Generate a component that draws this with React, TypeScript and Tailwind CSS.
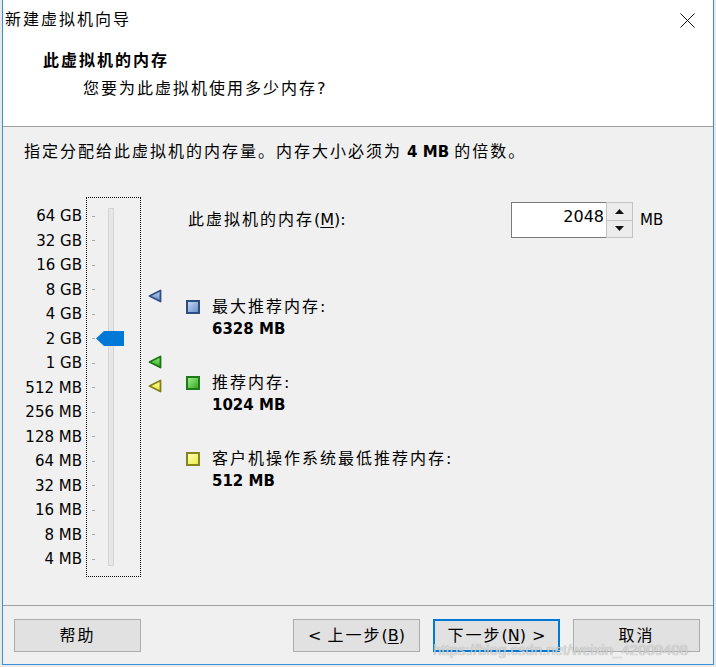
import React from "react";

const labels = ["64 GB","32 GB","16 GB","8 GB","4 GB","2 GB","1 GB","512 MB","256 MB","128 MB","64 MB","32 MB","16 MB","8 MB","4 MB"];

function C({ children, bold }: { children: React.ReactNode; bold?: boolean }) {
  return <span className={"tracking-[2px] " + (bold ? "font-bold" : "")}>{children}</span>;
}

function Tri({ fill1, fill2, stroke }: { fill1: string; fill2: string; stroke: string }) {
  const id = "g" + fill1.replace("#", "");
  return (
    <svg width="14" height="14" viewBox="0 0 14 14">
      <defs>
        <linearGradient id={id} x1="0" y1="0" x2="0" y2="1">
          <stop offset="0" stopColor={fill1} />
          <stop offset="1" stopColor={fill2} />
        </linearGradient>
      </defs>
      <polygon points="1.5,7 12.5,1.5 12.5,12.5" fill={`url(#${id})`} stroke={stroke} strokeWidth="1.8" strokeLinejoin="round" />
    </svg>
  );
}

function Sq({ fill1, fill2, stroke }: { fill1: string; fill2: string; stroke: string }) {
  const id = "s" + fill1.replace("#", "");
  return (
    <svg width="14" height="14" viewBox="0 0 14 14" className="shrink-0 mt-[4px]">
      <defs>
        <linearGradient id={id} x1="0" y1="0" x2="1" y2="1">
          <stop offset="0" stopColor={fill1} />
          <stop offset="1" stopColor={fill2} />
        </linearGradient>
      </defs>
      <rect x="0" y="0" width="14" height="14" fill={stroke} />
      <rect x="2" y="2" width="10" height="10" fill={`url(#${id})`} />
    </svg>
  );
}

export default function App() {
  return (
    <div className="relative w-[716px] h-[667px] bg-[#e9e9e9] pl-[2px] font-['DejaVu_Sans','Noto_Sans_CJK_SC',sans-serif] text-black">
      <div className="w-[712px] h-[665px] flex flex-col border-l border-r border-b border-[#3a8fd8] bg-[#f0f0f0]">
        {/* title bar */}
        <div className="h-[40px] bg-white flex items-center justify-between pl-[2px] pr-[18px]">
          <span className="text-[16px] leading-[22px]"><C>新建虚拟机向导</C></span>
          <svg width="15" height="15" viewBox="0 0 15 15">
            <path d="M0.5 0.5 L14.5 14.5 M14.5 0.5 L0.5 14.5" stroke="#111" strokeWidth="1" />
          </svg>
        </div>
        {/* header */}
        <div className="h-[86px] bg-white flex flex-col pt-[10px]">
          <div className="pl-[40px] text-[16px] leading-[22px] font-bold"><C bold>此虚拟机的内存</C></div>
          <div className="pl-[80px] mt-[6px] text-[16px] leading-[22px]"><C>您要为此虚拟机使用多少内存</C>?</div>
        </div>
        <div className="h-px bg-[#a0a0a0]" />
        {/* body */}
        <div className="h-[478px] flex flex-col pt-[14px]">
          <div className="pl-[21px] text-[16px] leading-[22px] whitespace-nowrap">
            <C>指定分配给此虚拟机的内存量。内存大小必须为</C> <span className="font-bold text-[15px]">4 MB</span> <C>的倍数。</C>
          </div>
          <div className="flex mt-[34px]">
            {/* labels */}
            <div className="w-[79px] pt-[7px] flex flex-col items-end">
              {labels.map((l) => (
                <div key={l} className="h-[24.5px] leading-[24.5px] text-[15px] whitespace-nowrap">{l}</div>
              ))}
            </div>
            {/* slider box */}
            <div className="relative ml-[4px] w-[55px] h-[380px] border border-dotted border-black flex">
              <div className="pl-[5px] pt-[6px] flex flex-col">
                {labels.map((l) => (
                  <div key={l} className="h-[24.5px] flex items-center">
                    <div className="w-[3px] h-px bg-[#a8a8a8]" />
                  </div>
                ))}
              </div>
              <div className="ml-[13px] mt-[10px] w-[6px] h-[358px] bg-[#e7e7e7] border border-[#d4d4d4]" />
              <svg className="absolute left-[9px] top-[133px]" width="28" height="15" viewBox="0 0 28 15">
                <polygon points="0,7.5 8,0 28,0 28,15 8,15" fill="#0078d7" />
              </svg>
            </div>
            {/* markers */}
            <div className="relative w-[45px] h-[380px]">
              <div className="absolute left-[7px] top-[92px]"><Tri fill1="#c4d6f2" fill2="#5a82c0" stroke="#2f4f86" /></div>
              <div className="absolute left-[7px] top-[158px]"><Tri fill1="#98ee80" fill2="#2ea820" stroke="#1a7414" /></div>
              <div className="absolute left-[7px] top-[182px]"><Tri fill1="#ffffa0" fill2="#e8e830" stroke="#807e1c" /></div>
            </div>
            {/* right side */}
            <div className="flex flex-col">
              <div className="mt-[5px] flex items-center">
                <div className="w-[325px] pl-[2px] text-[16px] leading-[22px] whitespace-nowrap">
                  <C>此虚拟机的内存</C>(<span className="underline underline-offset-2">M</span>):
                </div>
                <div className="w-[96px] h-[36px] bg-white border border-[#7a7a7a] flex items-start justify-end pt-[4px] pr-[2px] text-[16px] leading-[20px]">2048</div>
                <div className="w-[27px] h-[36px] flex flex-col border border-[#c2c2c2] bg-[#f0f0f0] -ml-[1px]">
                  <div className="flex-1 flex items-center justify-center border-b border-[#c2c2c2] bg-[#ececec]">
                    <svg width="9" height="5" viewBox="0 0 9 5"><polygon points="0,5 4.5,0 9,5" fill="#111" /></svg>
                  </div>
                  <div className="flex-1 flex items-center justify-center bg-[#ececec]">
                    <svg width="9" height="5" viewBox="0 0 9 5"><polygon points="0,0 9,0 4.5,5" fill="#111" /></svg>
                  </div>
                </div>
                <div className="ml-[7px] text-[15px]">MB</div>
              </div>
              <div className="mt-[58px] flex">
                <Sq fill1="#c4d6ef" fill2="#6c91c8" stroke="#2d4c80" />
                <div className="ml-[12px] flex flex-col">
                  <div className="text-[16px] leading-[22px]"><C>最大推荐内存</C>:</div>
                  <div className="text-[15px] leading-[22px] font-bold">6328 MB</div>
                </div>
              </div>
              <div className="mt-[32px] flex">
                <Sq fill1="#a2ec8a" fill2="#35a826" stroke="#1d7a16" />
                <div className="ml-[12px] flex flex-col">
                  <div className="text-[16px] leading-[22px]"><C>推荐内存</C>:</div>
                  <div className="text-[15px] leading-[22px] font-bold">1024 MB</div>
                </div>
              </div>
              <div className="mt-[32px] flex">
                <Sq fill1="#ffffb4" fill2="#ecec48" stroke="#858420" />
                <div className="ml-[12px] flex flex-col">
                  <div className="text-[16px] leading-[22px]"><C>客户机操作系统最低推荐内存</C>:</div>
                  <div className="text-[15px] leading-[22px] font-bold">512 MB</div>
                </div>
              </div>
            </div>
          </div>
        </div>
        <div className="h-px bg-[#a0a0a0]" />
        {/* footer */}
        <div className="h-[58px] flex items-start pt-[13px] pl-[11px] pr-[13px] text-[16px]">
          <button className="w-[127px] h-[33px] bg-[#e1e1e1] border border-[#adadad] flex items-center justify-center"><C>帮助</C></button>
          <div className="flex-1" />
          <button className="w-[127px] h-[33px] bg-[#e1e1e1] border border-[#adadad] flex items-center justify-center whitespace-nowrap">
            &lt; <span className="ml-[6px]"><C>上一步</C></span>(<span className="underline underline-offset-2">B</span>)
          </button>
          <button className="ml-[13px] w-[127px] h-[33px] bg-[#e1e1e1] border-2 border-[#0078d7] flex items-center justify-center whitespace-nowrap">
            <C>下一步</C>(<span className="underline underline-offset-2">N</span>) <span className="ml-[6px]">&gt;</span>
          </button>
          <button className="ml-[13px] w-[127px] h-[33px] bg-[#e1e1e1] border border-[#adadad] flex items-center justify-center"><C>取消</C></button>
        </div>
      </div>
      <div className="absolute left-[433px] top-[639px] text-[15px] font-['Liberation_Sans',sans-serif] text-[#d8d8d8] opacity-80 whitespace-nowrap [text-shadow:0_0_1px_#888]">
        https://blog.csdn.net/weixin_42009408
      </div>
    </div>
  );
}
